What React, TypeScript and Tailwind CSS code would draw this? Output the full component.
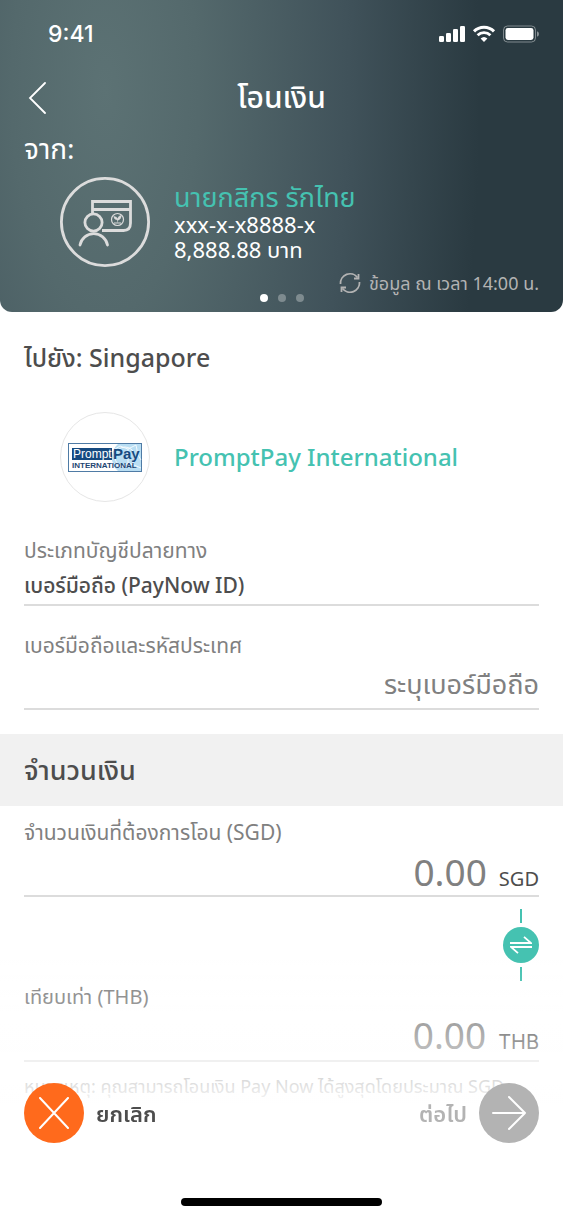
import { useState } from "react";

const currencies = { from: "SGD", to: "THB" };

function StatusIcons() {
  return (
    <svg width="100" height="18" viewBox="0 0 100 18" fill="none" aria-hidden="true">
      <rect x="0" y="11" width="5" height="6" rx="1.3" fill="#fff" />
      <rect x="7" y="8" width="5" height="9" rx="1.3" fill="#fff" />
      <rect x="14" y="4" width="5" height="13" rx="1.3" fill="#fff" />
      <rect x="21" y="1" width="5" height="16" rx="1.3" fill="#fff" />
      <path d="M35 6.4 A14 14 0 0 1 55 6.4" stroke="#fff" strokeWidth="3" />
      <path d="M38.6 10.2 A9 9 0 0 1 51.4 10.2" stroke="#fff" strokeWidth="2.8" />
      <path d="M45 17 L41.6 13.5 A5 5 0 0 1 48.4 13.5 Z" fill="#fff" />
      <rect x="64.5" y="1" width="32" height="16" rx="4" stroke="#fff" strokeOpacity="0.4" />
      <rect x="66.5" y="3" width="28" height="12" rx="2.4" fill="#fff" />
      <path d="M98 6.2 Q100 7 100 9 Q100 11 98 11.8 Z" fill="#fff" fillOpacity="0.45" />
    </svg>
  );
}

function AccountIcon() {
  return (
    <svg width="90" height="90" viewBox="0 0 90 90" fill="none" stroke="#dcdcdc" strokeWidth="2.8" aria-hidden="true">
      <circle cx="45" cy="45" r="43.6" />
      <path d="M32.500 36 V24.500 H70.500 V46 Q70.500 53.500 63.500 53.500 H42" />
      <path d="M33 32.500 H71" />
      <circle cx="33.500" cy="45.500" r="8.600" />
      <path d="M20 68 A14 14 0 0 1 47.500 68" strokeLinecap="round" />
      <circle cx="57.500" cy="42.500" r="6" strokeWidth="1.200" />
      <path d="M57.500 45.500 V43 Q54 42.500 53.800 39.500 Q57 39.500 57.500 42 Q58.500 38.500 61.200 38.500 Q61.500 42 57.500 43.500" fill="#dcdcdc" strokeWidth="0.500" />
      <path d="M54 46 H61" strokeWidth="1" />
    </svg>
  );
}

function PromptPayLogo() {
  return (
    <svg width="74" height="29" viewBox="0 0 74 29" role="img" aria-label="PromptPay International">
      <rect x="0.5" y="0.5" width="73" height="28" fill="#fff" stroke="#4f7ba5" />
      <path d="M50 1 H73 V28 H50 Q43 22 44 13 Q45 5 50 1 Z" fill="#b9def3" />
      <g stroke="#fff" strokeWidth="0.8" fill="none">
        <path d="M44 8 L52 3 L60 6 L68 2 M43 19 L52 24 L61 20 L73 25 M60 6 V20 M68 2 L70 12 L73 17" />
        <circle cx="57" cy="14" r="10" />
      </g>
      <rect x="4" y="5" width="40" height="12" fill="#164a80" />
      <text x="5" y="15" fontSize="12" fill="#fff" fontFamily="Liberation Sans, sans-serif">Prompt</text>
      <text x="45" y="16" fontSize="15" fontWeight="700" fill="#164a80" fontFamily="Liberation Sans, sans-serif">Pay</text>
      <text x="4" y="25" fontSize="8" fontWeight="700" fill="#1f4672" fontFamily="Liberation Sans, sans-serif">INTERNATIONAL</text>
    </svg>
  );
}

function Header() {
  return (
    <header className="rounded-b-xl bg-[radial-gradient(ellipse_375px_900px_at_105px_90px,#5c7274_0%,#54696c_25%,#40525a_65%,#2a3a41_100%)] text-white">
      {/* STATUS BAR */}
      <div className="flex h-17 items-center justify-between pr-6 pl-12">
        <span className="font-['Inter'] text-[23px] font-medium">9:41</span>
        <StatusIcons />
      </div>

      {/* TITLE */}
      <div className="grid h-15 grid-cols-[48px_1fr_48px] items-center px-3">
        <button aria-label="ย้อนกลับ" className="flex h-12 items-center pl-4">
          <svg width="18" height="32" viewBox="0 0 18 32" fill="none" stroke="#fff" strokeWidth="1.8" strokeLinecap="round">
            <path d="M17 1 L2 16 L17 31" />
          </svg>
        </button>
        <h1 className="pb-0.5 text-center text-[30px] leading-10 font-medium">โอนเงิน</h1>
      </div>

      <p className="h-10 px-6 text-[28px] leading-10">จาก:</p>

      {/* ACCOUNT */}
      <div className="mt-[9px] flex items-center gap-6 px-15">
        <AccountIcon />
        <div>
          <p className="text-[27px] leading-[30px] text-[#45c2b1]">นายกสิกร รักไทย</p>
          <p className="text-[22px] leading-[25px]">xxx-x-x8888-x</p>
          <p className="text-[22px] leading-[25px]">8,888.88 บาท</p>
        </div>
      </div>

      <div className="mt-[5px] flex h-[22px] items-center justify-end gap-2 px-6 text-lg text-[#b3b3b3]">
        <button aria-label="อัปเดตข้อมูล">
          <svg width="22" height="22" viewBox="0 0 22 22" fill="none" stroke="currentColor" strokeWidth="1.8">
            <path d="M1.500 12 A9.500 9.500 0 0 1 18.500 5.500 M20.500 10 A9.500 9.500 0 0 1 3.500 16.500" />
            <path d="M19.500 2 V6.500 H15 M2.500 20 V15.500 H7" />
          </svg>
        </button>
        <span className="leading-[22px]">ข้อมูล ณ เวลา 14:00 น.</span>
      </div>

      <div className="flex justify-center gap-2.5 pb-2.5">
        <span className="size-2 rounded-full bg-white" />
        <span className="size-2 rounded-full bg-[#7e8b8f]" />
        <span className="size-2 rounded-full bg-[#7e8b8f]" />
      </div>
    </header>
  );
}

export default function App() {
  const [amount, setAmount] = useState("");
  const [phone, setPhone] = useState("");

  return (
    <div className="min-h-screen bg-white font-['Noto_Sans','Noto_Sans_Thai',sans-serif] text-[#4d4d4d]">
      <Header />

      <main>
        {/* RECIPIENT */}
        <section className="px-6 pt-6">
          <h2 className="text-[25px] leading-[42px] font-medium">ไปยัง: Singapore</h2>

          <div className="mt-[34px] flex items-center gap-6 px-9">
            <div className="flex size-[90px] items-center justify-center rounded-full border border-[#e6e6e6]">
              <PromptPayLogo />
            </div>
            <p className="text-2xl font-medium text-[#45c2b1]">PromptPay International</p>
          </div>

          <label htmlFor="type" className="mt-[34px] block text-[21px] leading-7 text-[#808080]">
            ประเภทบัญชีปลายทาง
          </label>
          <select
            id="type"
            className="mt-1 block h-[38px] w-full appearance-none border-b-2 border-[#dcdcdc] bg-transparent text-[21px] font-medium"
          >
            <option>เบอร์มือถือ (PayNow ID)</option>
          </select>

          <label htmlFor="phone" className="mt-[25px] block text-[21px] leading-7 text-[#808080]">
            เบอร์มือถือและรหัสประเทศ
          </label>
          <input
            id="phone"
            type="tel"
            value={phone}
            placeholder="ระบุเบอร์มือถือ"
            onChange={(e) => setPhone(e.target.value)}
            className="mt-1 block h-[47px] w-full border-b-2 border-[#dcdcdc] pb-1 text-right text-[27px] outline-none placeholder:text-[#808080]"
          />
        </section>

        {/* AMOUNT */}
        <h2 className="mt-6 bg-[#f1f1f1] px-6 text-[27px] leading-[72px] font-medium">จำนวนเงิน</h2>

        <section className="px-6 pt-3">
          <label htmlFor="amount" className="block text-[21px] leading-7 text-[#808080]">
            จำนวนเงินที่ต้องการโอน ({currencies.from})
          </label>
          <div className="flex h-[51px] items-baseline gap-3 border-b-2 border-[#dcdcdc]">
            <input
              id="amount"
              inputMode="decimal"
              value={amount}
              placeholder="0.00"
              onChange={(e) => setAmount(e.target.value)}
              className="h-13 min-w-0 flex-1 text-right text-[37px] outline-none placeholder:text-[#808080]"
            />
            <span className="text-xl">{currencies.from}</span>
          </div>

          <div className="mt-3 flex flex-col items-end">
            <div className="flex w-9 flex-col items-center gap-1">
              <span className="h-3.5 w-0.5 bg-[#45c2b1]" />
              <button aria-label="สลับสกุลเงิน" className="flex size-9 items-center justify-center rounded-full bg-[#45c2b1]">
                <svg width="22" height="18" viewBox="0 0 22 18" fill="none" stroke="#fff" strokeWidth="1.8">
                  <path d="M0 7 H21 L14 0.800 M22 11 H1 L8 17.200" />
                </svg>
              </button>
              <span className="h-3.5 w-0.5 bg-[#45c2b1]" />
            </div>
          </div>

          <p className="mt-0.5 text-xl leading-7 text-[#808080]">เทียบเท่า ({currencies.to})</p>
          <div className="flex h-[51px] items-baseline justify-end gap-3 border-b-2 border-[#dcdcdc]">
            <output className="text-[37px] leading-12 text-[#808080]">0.00</output>
            <span className="font-['Inter'] text-xl">{currencies.to}</span>
          </div>

          <p className="mt-2.5 pb-32 text-lg leading-7 text-[#808080]">
            หมายเหตุ: คุณสามารถโอนเงิน Pay Now ได้สูงสุดโดยประมาณ SGD
          </p>
        </section>
      </main>

      {/* BOTTOM ACTIONS */}
      <footer className="fixed inset-x-0 bottom-0 bg-[linear-gradient(to_bottom,transparent_0,#ffffff40_60px,#ffffffbf_124px,#fff_150px)] pt-[123px]">
        <div className="flex items-center justify-between px-6 text-[22px] font-semibold">
          <button className="flex items-center gap-3">
            <span className="flex size-15 items-center justify-center rounded-full bg-[#ff6a1c]">
              <svg width="30" height="32" viewBox="0 0 30 32" stroke="#fff" strokeWidth="2" strokeLinecap="round">
                <path d="M1 1 L29 31 M29 1 L1 31" />
              </svg>
            </span>
            ยกเลิก
          </button>
          <button disabled className="flex items-center gap-3 text-[#b3b3b3]">
            ต่อไป
            <span className="flex size-15 items-center justify-center rounded-full bg-[#b3b3b3]">
              <svg width="34" height="36" viewBox="0 0 34 36" fill="none" stroke="#fff" strokeWidth="2" strokeLinecap="round" strokeLinejoin="round">
                <path d="M1 18 H33 M17 2 L33 18 L17 34" />
              </svg>
            </span>
          </button>
        </div>
        <div className="mx-auto mt-[55px] mb-3 h-2 w-[201px] rounded-full bg-black" />
      </footer>
    </div>
  );
}
